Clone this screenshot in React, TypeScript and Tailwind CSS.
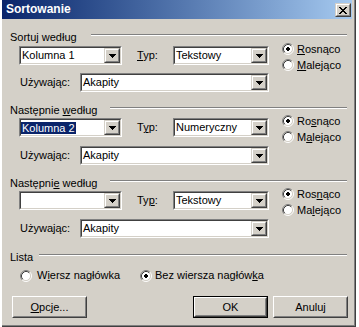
import type { ReactNode } from 'react'

// klasyczne okno Windows: ramki 3D z czterech kolorów
function Field({ className, children }: { className: string; children?: ReactNode }) {
  return (
    <div className={`flex-none border border-t-[#808080] border-l-[#808080] border-r-white border-b-white ${className}`}>
      <div className="flex h-full border border-t-[#404040] border-l-[#404040] border-r-[#d4d0c8] border-b-[#d4d0c8] bg-white">
        {children}
      </div>
    </div>
  )
}

function DropButton() {
  return (
    <div className="h-full w-[16px] flex-none border border-t-[#d4d0c8] border-l-[#d4d0c8] border-r-[#404040] border-b-[#404040]">
      <div className="flex h-full items-center justify-center border border-t-white border-l-white border-r-[#808080] border-b-[#808080] bg-[#d4d0c8]">
        <svg width="7" height="4" viewBox="0 0 7 4" shapeRendering="crispEdges">
          <path d="M0 0h7v1H0zM1 1h5v1H1zM2 2h3v1H2zM3 3h1v1H3z" fill="#000" />
        </svg>
      </div>
    </div>
  )
}

function Combo({ className, value, selected }: { className: string; value?: string; selected?: boolean }) {
  return (
    <Field className={className}>
      <div className="flex flex-1 items-center overflow-hidden whitespace-nowrap">
        {selected ? (
          <span className="bg-[#0a246a] px-px leading-[12px] text-white">{value}</span>
        ) : (
          <span className="pl-px">{value}</span>
        )}
      </div>
      <DropButton />
    </Field>
  )
}

function RadioMark({ checked }: { checked?: boolean }) {
  return (
    <svg width="12" height="12" viewBox="0 0 12 12" className="flex-none">
      <circle cx="6" cy="6" r="4.5" fill="#fff" />
      <path d="M2.11 9.89A5.5 5.5 0 0 1 9.89 2.11" fill="none" stroke="#808080" />
      <path d="M9.89 2.11A5.5 5.5 0 0 1 2.11 9.89" fill="none" stroke="#fff" />
      <path d="M2.82 9.18A4.5 4.5 0 0 1 9.18 2.82" fill="none" stroke="#404040" />
      <path d="M9.18 2.82A4.5 4.5 0 0 1 2.82 9.18" fill="none" stroke="#d4d0c8" />
      {checked && <path d="M5 4h2v1h1v2h-1v1h-2v-1h-1v-2h1z" fill="#000" shapeRendering="crispEdges" />}
    </svg>
  )
}

function Radio({ checked, children }: { checked?: boolean; children: ReactNode }) {
  return (
    <div className="flex h-[16px] items-center whitespace-nowrap">
      <RadioMark checked={checked} />
      <span className="ml-[3px]">{children}</span>
    </div>
  )
}

function Header({ className, labelW, lineW, children }: any) {
  return (
    <div className={`flex h-[13px] pl-[8px] ${className}`}>
      <div className={`flex-none whitespace-nowrap leading-[13px] ${labelW}`}>{children}</div>
      <div className={`mt-[3px] h-[2px] flex-none border-t border-b border-t-[#808080] border-b-white ${lineW}`} />
    </div>
  )
}

function SortGroup({ title, headerMt, comboMt, usingMt, lineW, labelW, column, selected, type, typLabel, asc, desc }: any) {
  return (
    <>
      <Header className={headerMt} labelW={labelW} lineW={lineW}>{title}</Header>
      <div className={`flex ${comboMt}`}>
        <div className="flex w-[267px] flex-none flex-col">
          <div className="flex h-[19px] items-center">
            <Combo className="ml-[17px] h-[19px] w-[103px]" value={column} selected={selected} />
            <span className="ml-[15px] w-[36px] flex-none">{typLabel}</span>
            <Combo className="h-[19px] w-[96px]" value={type} />
          </div>
          <div className={`flex h-[19px] items-center ${usingMt}`}>
            <span className="ml-[18px] w-[60px] flex-none">Używając:</span>
            <Combo className="h-[19px] w-[189px]" value="Akapity" />
          </div>
        </div>
        <div className="ml-[13px] -mt-[5px] flex flex-col">
          <Radio checked>{asc}</Radio>
          <Radio>{desc}</Radio>
        </div>
      </div>
    </>
  )
}

function Button({ className, isDefault, children }: { className: string; isDefault?: boolean; children: ReactNode }) {
  const body = (
    <div className="flex h-full border border-t-white border-l-white border-r-[#404040] border-b-[#404040]">
      <div className="flex flex-1 items-center justify-center border border-t-[#d4d0c8] border-l-[#d4d0c8] border-r-[#808080] border-b-[#808080]">
        {children}
      </div>
    </div>
  )
  if (isDefault) return <div className={`flex-none border border-black ${className}`}>{body}</div>
  return <div className={`flex-none ${className}`}>{body}</div>
}

export default function App() {
  return (
    <div className="flex h-[327px] w-[359px] overflow-hidden bg-white font-['Liberation_Sans',Arial,sans-serif] text-[11px] text-black">
      <div className="w-[2px] flex-none" />
      <div className="h-[327px] w-[354px] flex-none border-r border-b border-r-[#404040] border-b-[#404040]">
        <div className="flex h-full flex-col border-r border-b border-r-[#808080] border-b-[#808080] bg-[#d4d0c8]">
          {/* pasek tytułu */}
          <div className="flex h-[19px] w-[350px] flex-none justify-between bg-gradient-to-r from-[#0a246a] to-[#a6caf0]">
            <span className="pl-[4px] text-[12px] font-bold leading-[19px] text-white">Sortowanie</span>
            <div className="mt-[3px] mr-px h-[14px] w-[16px] border border-t-[#d4d0c8] border-l-[#d4d0c8] border-r-[#404040] border-b-[#404040]">
              <div className="flex h-full items-center justify-center border border-t-white border-l-white border-r-[#808080] border-b-[#808080] bg-[#d4d0c8]">
                <svg width="8" height="7" viewBox="0 0 8 7" shapeRendering="crispEdges">
                  <path d="M0 0h2v1H0zM6 0h2v1H6zM1 1h2v1H1zM5 1h2v1H5zM2 2h4v1H2zM3 3h2v1H3zM2 4h4v1H2zM1 5h2v1H1zM5 5h2v1H5zM0 6h2v1H0zM6 6h2v1H6z" fill="#000" />
                </svg>
              </div>
            </div>
          </div>

          <SortGroup
            title={<>Sortu<u>j</u> według</>}
            headerMt="mt-[12px]" comboMt="mt-[2px]" usingMt="mt-[8px]"
            labelW="w-[81px]" lineW="w-[256px]"
            column="Kolumna 1" type="Tekstowy"
            typLabel={<><u>T</u>yp:</>}
            asc={<><u>R</u>osnąco</>} desc={<><u>M</u>alejąco</>}
          />
          <SortGroup
            title={<>Następnie <u>w</u>edług</>}
            headerMt="mt-[12px]" comboMt="mt-[1px]" usingMt="mt-[9px]"
            labelW="w-[100px]" lineW="w-[237px]"
            column="Kolumna 2" selected type="Numeryczny"
            typLabel={<>T<u>y</u>p:</>}
            asc={<>Ro<u>s</u>nąco</>} desc={<>M<u>a</u>lejąco</>}
          />
          <SortGroup
            title={<>Następni<u>e</u> według</>}
            headerMt="mt-[12px]" comboMt="mt-[1px]" usingMt="mt-[9px]"
            labelW="w-[100px]" lineW="w-[237px]"
            column="" type="Tekstowy"
            typLabel={<>Ty<u>p</u>:</>}
            asc={<>Ros<u>n</u>ąco</>} desc={<>Ma<u>l</u>ejąco</>}
          />

          <Header className="mt-[13px]" labelW="w-[29px]" lineW="w-[308px]">Lista</Header>
          <div className="mt-[4px] flex h-[15px] items-center">
            <div className="ml-[18px] flex w-[120px] flex-none items-center">
              <RadioMark />
              <span className="ml-[5px] whitespace-nowrap">W<u>i</u>ersz nagłówka</span>
            </div>
            <div className="flex items-center">
              <RadioMark checked />
              <span className="ml-[3px] whitespace-nowrap">Bez wiersza nagłów<u>k</u>a</span>
            </div>
          </div>

          <div className="mt-[13px] flex h-[22px]">
            <Button className="ml-[10px] h-[22px] w-[75px]"><span><u>O</u>pcje...</span></Button>
            <Button className="ml-[106px] h-[22px] w-[75px]" isDefault>OK</Button>
            <Button className="ml-[5px] h-[22px] w-[75px]">Anuluj</Button>
          </div>
        </div>
      </div>
    </div>
  )
}
